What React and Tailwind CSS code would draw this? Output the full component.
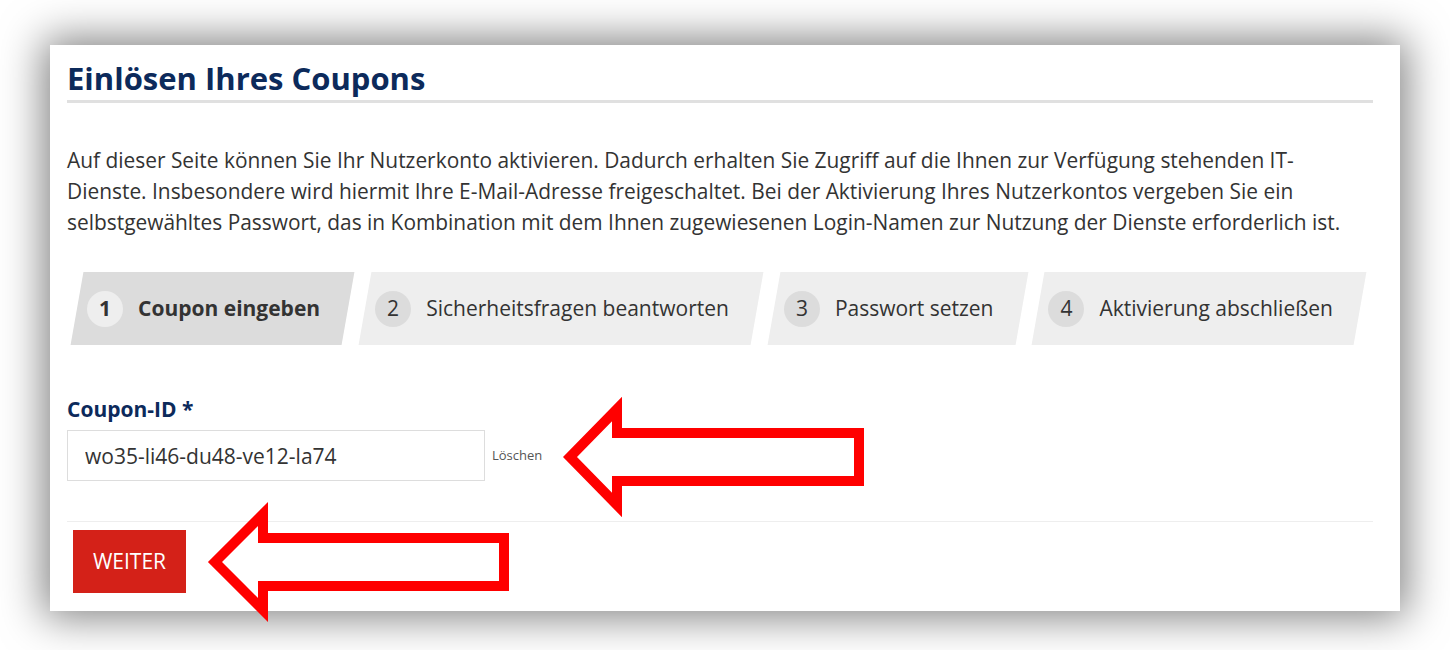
import React, { useState } from 'react';

const steps = [
  { nr: 1, label: 'Coupon eingeben' },
  { nr: 2, label: 'Sicherheitsfragen beantworten' },
  { nr: 3, label: 'Passwort setzen' },
  { nr: 4, label: 'Aktivierung abschließen' }
];

const Step = ({ nr, label, active }) => (
  <div className="relative flex items-center h-[73px] pl-[10px] pr-[28px]">
    <div className={`absolute inset-0 skew-x-[-10deg] ${active ? 'bg-[#dcdcdc]' : 'bg-[#eeeeee]'}`} />
    <span
      className={`relative flex items-center justify-center w-[36px] h-[36px] rounded-full text-[21px] text-[#333] ${
        active ? 'bg-[#eeeeee] font-bold' : 'bg-[#dcdcdc]'
      }`}
    >
      {nr}
    </span>
    <span className={`relative ml-[15px] text-[21px] text-[#333] whitespace-nowrap ${active ? 'font-bold' : ''}`}>
      {label}
    </span>
  </div>
);

// red outline arrows pasted over the screenshot
const Arrows = () => (
  <svg className="absolute inset-0 pointer-events-none" width="1450" height="650" viewBox="0 0 1450 650">
    <polygon
      points="570,457 617,409 617,433 859,433 859,481 617,481 617,505"
      fill="white"
      stroke="#ff0000"
      strokeWidth="10"
      strokeLinejoin="miter"
    />
    <polygon
      points="215,562 263,514 263,538 504,538 504,586 263,586 263,610"
      fill="white"
      stroke="#ff0000"
      strokeWidth="10"
      strokeLinejoin="miter"
    />
  </svg>
);

const App = () => {
  const [couponId, setCouponId] = useState('wo35-li46-du48-ve12-la74');

  return (
    <div
      className="relative w-[1450px] h-[650px] overflow-hidden bg-white pt-[45px] pl-[50px]"
      style={{ fontFamily: '"Open Sans", "Noto Sans", sans-serif' }}
    >
      <div className="w-[1350px] h-[566px] bg-white shadow-[0_0_40px_6px_rgba(0,0,0,0.5)] pt-[13px] pl-[17px] pr-[27px]">
        <h1 className="text-[31px] leading-[40px] font-bold text-[#0c2a5b] pb-[2px] border-b-[3px] border-[#e0e0e0]">
          Einlösen Ihres Coupons
        </h1>

        <p className="mt-[42px] text-[20.9px] leading-[31px] text-[#333]">
          Auf dieser Seite können Sie Ihr Nutzerkonto aktivieren. Dadurch erhalten Sie Zugriff auf die Ihnen zur Verfügung stehenden IT-Dienste. Insbesondere wird hiermit Ihre E-Mail-Adresse freigeschaltet. Bei der Aktivierung Ihres Nutzerkontos vergeben Sie ein selbstgewähltes Passwort, das in Kombination mit dem Ihnen zugewiesenen Login-Namen zur Nutzung der Dienste erforderlich ist.
        </p>

        <div className="mt-[34px] ml-[10px] flex gap-[17px]">
          {steps.map(s => (
            <Step key={s.nr} nr={s.nr} label={s.label} active={s.nr === 1} />
          ))}
        </div>

        <label className="block mt-[51px] text-[21px] leading-[26px] font-bold text-[#0c2a5b]">Coupon-ID *</label>
        <div className="mt-[8px] flex items-center">
          <input
            type="text"
            value={couponId}
            onChange={e => setCouponId(e.target.value)}
            className="w-[418px] h-[51px] border border-[#dddddd] px-[17px] text-[21px] text-[#333] outline-none"
          />
          <button type="button" onClick={() => setCouponId('')} className="ml-[7px] text-[13px] text-[#555]">
            Löschen
          </button>
        </div>

        <div className="mt-[40px] border-t border-[#eeeeee]" />

        <button type="button" className="mt-[8px] ml-[6px] w-[113px] h-[63px] bg-[#d42118] text-white text-[21px] uppercase">
          Weiter
        </button>
      </div>

      <Arrows />
    </div>
  );
};

export default App;
